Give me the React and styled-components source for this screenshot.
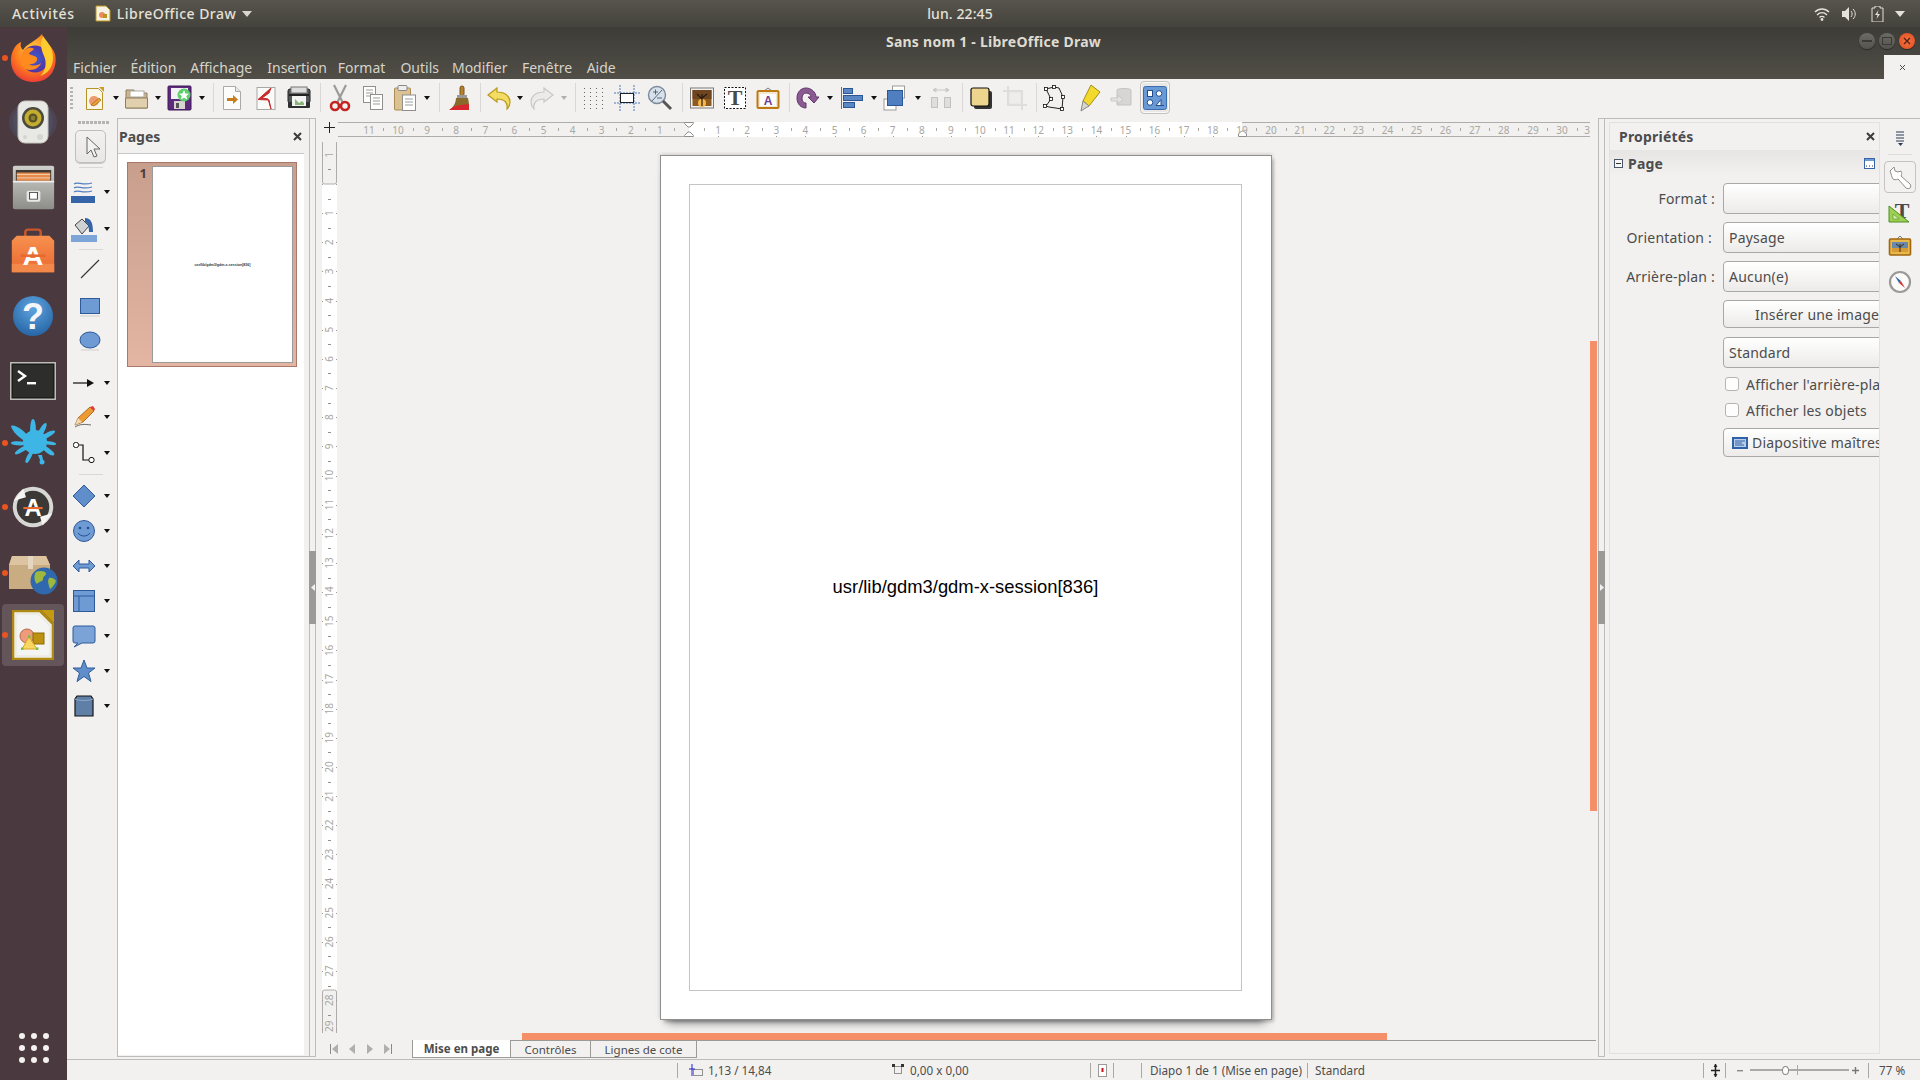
import React from 'react';
import styled, { createGlobalStyle } from 'styled-components';

const Global = createGlobalStyle`
  html, body { margin: 0; padding: 0; background: #f2f1f0; overflow: hidden; }
  * { box-sizing: border-box; }
  #root { font-family: "Noto Sans", "Open Sans", sans-serif; }
`;

const Screen = styled.div`width:1920px;height:1080px;display:flex;flex-direction:column;overflow:hidden;`;
const TopBar = styled.header`height:27px;flex:none;display:grid;grid-template-columns:1fr auto 1fr;align-items:center;
  background:linear-gradient(#57544d,#45433d);color:#e4e1d8;font-size:14px;font-weight:500;`;
const TopLeft = styled.div`display:flex;align-items:center;padding-left:12px;`;
const Activities = styled.span`margin-right:20px;letter-spacing:.7px;`;
const AppName = styled.span`margin:0 6px 0 6px;letter-spacing:.45px;`;
const Clock = styled.span`letter-spacing:.1px;`;
const TopRight = styled.div`display:flex;align-items:center;justify-content:flex-end;gap:11px;padding-right:15px;`;
const BatterySlot = styled.span`display:block;margin-left:3px;`;

const Body = styled.div`flex:1;display:flex;min-height:0;`;
const Dock = styled.nav`width:67px;flex:none;background:#4a393e;display:flex;flex-direction:column;align-items:center;`;
const DockSlot = styled.div`width:62px;height:62px;margin-left:-5px;margin-top:${p=>p.$mt||0}px;flex:none;display:flex;align-items:center;justify-content:center;
  border-radius:4px;position:relative;background:${p=>p.$active?'#64555a':'transparent'};transform:translateX(2px);`;
const RunDot = styled.i`position:absolute;left:0;top:50%;margin-top:-3px;width:6px;height:6px;border-radius:50%;background:#e95420;`;
const AppGrid = styled.div`margin-top:auto;margin-bottom:17px;display:grid;grid-template-columns:repeat(3,6px);gap:6px;`;
const AppDot = styled.i`width:6px;height:6px;border-radius:50%;background:#f4f2f0;`;

const Win = styled.div`flex:1;display:flex;flex-direction:column;min-width:0;background:#f2f1f0;`;
const WinHeader = styled.div`background:linear-gradient(#3d3c37,#514e47);flex:none;`;
const TitleBar = styled.div`height:28px;display:grid;grid-template-columns:1fr auto 1fr;align-items:center;`;
const Title = styled.div`color:#dfdbd2;font-size:14px;font-weight:700;grid-column:2;letter-spacing:.25px;`;
const WinButtons = styled.div`display:flex;justify-content:flex-end;gap:4px;padding-right:5px;`;
const WinBtn = styled.div`width:16px;height:16px;border-radius:50%;display:flex;align-items:center;justify-content:center;
  background:${p=>p.$close?'radial-gradient(#f5764a,#df4a16)':'linear-gradient(#6d6b65,#55534d)'};box-shadow:0 1px 1px rgba(0,0,0,.4);`;
const MenuBar = styled.div`height:24px;display:flex;align-items:center;padding-left:6px;color:#d6d3ca;font-size:14px;`;
const MenuItem = styled.span`margin-right:${p=>p.$gap}px;white-space:nowrap;`;
const DocClose = styled.div`margin-left:auto;width:36px;height:24px;background:#f2f1f0;color:#4c4c4c;display:flex;align-items:center;justify-content:center;`;

const Toolbar = styled.div`height:39px;flex:none;display:flex;align-items:center;background:#f2f1f0;padding-bottom:2px;`;
const ToolGrip = styled.div`width:3px;height:22px;margin-left:3px;background:repeating-linear-gradient(#b5b4b2 0 2px,transparent 2px 4px);`;
const ToolIcon = styled.div`flex:none;width:${p=>p.$w}px;height:${p=>p.$h||26}px;margin-left:${p=>p.$ml}px;display:flex;align-items:center;justify-content:center;
  ${p=>p.$on?'border:1px solid #c4c3c1;border-radius:4px;background:#e9e8e6;box-shadow:inset 0 0 0 1px #f8f8f7;':''}`;
const ToolSep = styled.div`flex:none;width:1px;height:29px;background:#d9d8d6;margin-left:${p=>p.$ml}px;`;
const Caret = styled.i`display:block;width:0;height:0;border:3.5px solid transparent;border-bottom:0;border-top:4px solid ${p=>p.$off?'#b0afad':'#111'};`;

const Main = styled.div`flex:1;display:flex;min-height:0;`;
const SideTools = styled.aside`width:50px;flex:none;display:flex;flex-direction:column;align-items:flex-start;padding-left:4px;`;
const SideGrip = styled.div`margin:3px 0 0 7px;width:31px;height:3px;background:repeating-linear-gradient(90deg,#b5b4b2 0 3px,transparent 3px 4px);`;
const SideRow = styled.div`height:26px;flex:none;display:flex;align-items:center;margin-top:${p=>p.$mt}px;padding-left:${p=>p.$solo?6:0}px;`;
const SideIcon = styled.div`width:26px;height:26px;display:flex;align-items:center;justify-content:center;`;
const SideCaret = styled.div`margin-left:6.5px;`;
const SelectBtn = styled.div`margin:6px 0 0 4px;width:31px;height:33px;border:1px solid #bfbebc;border-radius:5px;background:linear-gradient(#f2f1f0,#e8e7e5);display:flex;align-items:center;justify-content:center;box-shadow:0 1px 0 #c8c7c5;`;
const SideSep = styled.div`margin:${p=>p.$mt}px 0 0 8px;width:24px;height:1px;background:#d9d8d6;flex:none;`;

const PagesPanel = styled.section`width:199px;flex:none;display:flex;border-top:1px solid #bdbcba;border-left:1px solid #bdbcba;margin-bottom:2px;border-bottom:1px solid #bdbcba;`;
const PagesInner = styled.div`width:187px;display:flex;flex-direction:column;`;
const PanelHead = styled.div`height:34px;flex:none;display:flex;align-items:center;justify-content:space-between;padding:1px 0 0 1px;color:#4c4c4c;font-size:14px;font-weight:700;`;
const PanelClose = styled.span`display:flex;margin-right:2px;`;
const PageList = styled.div`flex:1;margin-bottom:1px;background:#fff;border-top:1px solid #c8c7c5;padding:8px 0 0 9px;`;
const Thumb = styled.div`width:170px;height:205px;display:flex;background:linear-gradient(#c89e8d,#e3b5a2);border:1px solid #a8796a;padding:3px 3px 3px 0;`;
const ThumbNo = styled.div`width:24px;text-align:right;padding-right:5px;font-size:13px;font-weight:700;line-height:15px;color:#4a3f3c;`;
const ThumbPage = styled.div`flex:1;background:#fff;border:1px solid #9a9a9a;display:flex;align-items:center;justify-content:center;color:#333;font-family:"Liberation Sans",sans-serif;font-size:3.6px;white-space:nowrap;font-weight:700;`;
const Strip = styled.div`width:7px;margin-left:${p=>p.$ml||0}px;flex:none;display:flex;align-items:center;border-left:1px solid #bdbcba;border-right:1px solid #bdbcba;`;
const Handle = styled.div`width:7px;height:73px;flex:none;margin-left:-1px;background:#9b9a96;display:flex;align-items:center;justify-content:center;`;

const Workspace = styled.section`width:1282px;flex:none;display:flex;flex-direction:column;`;
const HRulerRow = styled.div`height:24px;flex:none;display:flex;`;
const Corner = styled.div`width:22px;padding:3px 0 0 7px;`;
const CenterRow = styled.div`height:891px;flex:none;display:flex;`;
const Canvas = styled.div`width:1252px;flex:none;padding:13px 0 0 322px;overflow:hidden;`;
const PageSheet = styled.div`width:612px;height:865px;background:#fff;border:1px solid #8f8f8f;padding:28px 29px 28px 28px;
  box-shadow:3px 3px 3px -1px rgba(0,0,0,.2),0 9px 9px -7px rgba(0,0,0,.55),2px -2px 2px rgba(0,0,0,.05),-2px -2px 2px rgba(0,0,0,.05);`;
const MarginBox = styled.div`width:100%;height:100%;border:1px solid #c4c4c4;display:flex;align-items:center;justify-content:center;padding-bottom:2px;
  color:#000;font-family:"Liberation Sans",Arial,sans-serif;font-size:18.4px;`;
const VScroll = styled.div`width:7px;flex:none;padding-top:199px;`;
const VThumb = styled.div`width:7px;height:470px;background:#f48f67;`;
const HScroll = styled.div`height:7px;flex:none;padding-left:206px;`;
const HThumb = styled.div`width:865px;height:7px;background:#f48f67;`;
const TabRow = styled.div`height:18px;flex:none;display:flex;`;
const TabNav = styled.div`width:96px;display:flex;align-items:center;gap:8px;padding-left:13px;`;
const TabStrip = styled.div`flex:1;display:flex;border-top:1px solid #9b9a97;margin-right:2px;`;
const Tab = styled.div`height:18px;margin-top:-1px;width:${p=>p.$w}px;flex:none;display:flex;align-items:center;justify-content:center;font-size:11.5px;color:#4c4c4c;
  border-bottom:1px solid #9b9a97;border-right:1px solid #9b9a97;border-left:${p=>p.$first?'1px solid #9b9a97':'0'};border-top:${p=>p.$active?'0':'1px solid #9b9a97'};
  background:${p=>p.$active?'#fff':'#f2f1f0'};font-weight:${p=>p.$active?700:400};`;

const Sidebar = styled.aside`flex:1;display:flex;min-width:0;border-top:1px solid #bdbcba;`;
const SideStripWrap = styled.div`display:flex;margin-bottom:2px;border-bottom:1px solid #bdbcba;`;
const PropsPanel = styled.div`width:271px;margin:3px 0 5px 4px;flex:none;overflow:hidden;border:1px solid #e2e1df;color:#4c4c4c;font-size:14px;letter-spacing:.2px;`;
const PropsHead = styled.div`height:27px;display:flex;align-items:center;justify-content:space-between;padding:0 4px 0 9px;font-weight:700;`;
const SectionHead = styled.div`height:26px;display:flex;align-items:center;padding:0 4px;font-weight:700;background:linear-gradient(#e6e5e3,#f2f1f0);`;
const SectionTitle = styled.span`margin-left:5px;flex:1;`;
const Form = styled.div`padding:7px 0 0 0;display:flex;flex-direction:column;`;
const FormRow = styled.div`display:flex;align-items:center;height:${p=>p.$h||31}px;margin-bottom:${p=>p.$mb??8}px;`;
const FieldLabel = styled.label`width:${p=>p.$w||113}px;flex:none;text-align:right;padding-right:8px;white-space:nowrap;margin-right:${p=>p.$mr||0}px;`;
const Field = styled.div`width:200px;height:100%;flex:none;margin-left:${p=>p.$ml||0}px;border:1px solid #a9a8a5;border-radius:4px;background:linear-gradient(#fff,#ecebe9);display:flex;align-items:center;
  padding-left:${p=>p.$pl||5}px;white-space:nowrap;gap:4px;`;
const CheckRow = styled.div`display:flex;align-items:center;height:22px;margin-left:115px;white-space:nowrap;margin-bottom:${p=>p.$mb||0}px;`;
const CheckBox = styled.i`width:14px;height:14px;border:1px solid #b5b4b2;border-radius:3px;background:#fdfdfd;flex:none;margin-right:7px;`;
const TabBar = styled.div`flex:1;display:flex;flex-direction:column;align-items:center;padding-top:11px;`;
const TabIcon = styled.div`width:32px;height:32px;margin-top:${p=>p.$mt||0}px;display:flex;align-items:center;justify-content:center;${p=>p.$on?'border:1px solid #c4c3c1;border-radius:4px;':''}`;
const TabSep = styled.div`width:24px;height:1px;background:#dddcda;margin-top:6px;`;

const StatusBar = styled.footer`height:21px;flex:none;border-top:1px solid #bdbcba;display:flex;align-items:center;font-size:11.7px;color:#4c4c4c;white-space:nowrap;`;
const Cell = styled.div`width:${p=>p.$w}px;height:15px;flex:none;display:flex;align-items:center;gap:${p=>p.$gap??4}px;padding-left:${p=>p.$pl||0}px;${p=>p.$sep?'border-left:1px solid #a9a8a5;':''}`;
const ZoomTrack = styled.div`width:99px;height:2px;background:#aaa9a7;margin:0 3px 0 7px;position:relative;`;
const ZoomKnob = styled.i`position:absolute;left:32px;top:-3px;width:7px;height:9px;border-radius:50%;background:#fff;border:1px solid #8a8987;`;
const ZoomMark = styled.i`position:absolute;left:47px;top:-4px;width:1px;height:10px;background:#aaa9a7;`;

const Svg = ({w=24,h,dw,dh,children}) => <svg width={dw||w} height={dh||h||w} viewBox={`0 0 ${w} ${h||w}`} preserveAspectRatio="none" style={{display:'block',flex:'none'}}>{children}</svg>;

/* ---- dock icons ---- */
const Firefox = () => <Svg w={52}>
  <defs>
    <radialGradient id="ffo" cx=".5" cy=".35" r=".75"><stop offset="0" stopColor="#ffd43a"/><stop offset=".55" stopColor="#ff7a1e"/><stop offset="1" stopColor="#e3283f"/></radialGradient>
    <radialGradient id="ffb" cx=".5" cy=".5" r=".6"><stop offset="0" stopColor="#3b5fd0"/><stop offset="1" stopColor="#5a2a9a"/></radialGradient>
  </defs>
  <path d="M35 2c2 8 10 11 13 20 3 13-4 28-21 28C12 50 3 40 4 26 5 18 9 12 14 10c-1 4 0 6 2 8 3-6 12-8 19-16z" fill="url(#ffo)"/>
  <circle cx="28" cy="27" r="13.5" fill="url(#ffb)"/>
  <path d="M36 4c4 6 10 11 10 22 0 10-6 16-13 18 6-5 7-14 4-20-2-5-5-12-1-20z" fill="#ffcb2e"/>
  <path d="M15 22c4-7 9-7 12-5-1 2-5 3-5 5 3 2 6 1 8 4 1 4-4 7-8 6 4 3 10 1 12-1-2 7-14 10-19 3-2-3-2-7 0-12z" fill="#ff8a1e"/>
</Svg>;
const SpeakerApp = () => <Svg w={52}>
  <ellipse cx="26" cy="26" rx="24" ry="21" fill="#566080" opacity=".3"/>
  <ellipse cx="26" cy="26" rx="20" ry="20" fill="#566080" opacity=".3"/>
  <rect x="11" y="5" width="30" height="42" rx="7" fill="#e8e8e4"/><rect x="11" y="5" width="30" height="42" rx="7" fill="none" stroke="#c6c6c0"/>
  <circle cx="26" cy="22" r="11" fill="#4c4a3e"/><circle cx="26" cy="22" r="8.500" fill="#c2ad2e"/><circle cx="26" cy="22" r="4.500" fill="#5a5326"/><circle cx="26" cy="22" r="2.200" fill="#8c8230"/>
  <circle cx="33" cy="41" r="3" fill="#d4d4d0"/><circle cx="18" cy="41" r="2" fill="#d4d4d0"/>
</Svg>;
const FilesApp = () => <Svg w={54} dw={53} dh={45}>
  <defs><linearGradient id="cab" x1="0" y1="0" x2="0" y2="1"><stop offset="0" stopColor="#cfcfcb"/><stop offset="1" stopColor="#8d8d89"/></linearGradient></defs>
  <rect x="6" y="1" width="42" height="52" rx="2" fill="url(#cab)"/><rect x="9" y="6" width="36" height="13" fill="#3f3a36"/>
  <rect x="10" y="9" width="34" height="10" fill="#e58a4a"/><rect x="10" y="11" width="34" height="1" fill="#f7d9b4"/><rect x="10" y="15" width="34" height="1" fill="#fff" opacity=".7"/>
  <rect x="6" y="19" width="42" height="2" fill="#eee"/>
  <rect x="20" y="31" width="14" height="13" rx="2" fill="#e7e7e5"/><rect x="23" y="33" width="8" height="8" fill="#fff" stroke="#444"/>
</Svg>;
const SoftwareApp = () => <Svg w={54} dw={52} dh={46}>
  <defs><linearGradient id="bag" x1="0" y1="0" x2="0" y2="1"><stop offset="0" stopColor="#f7914f"/><stop offset="1" stopColor="#e9682f"/></linearGradient></defs>
  <path d="M19 11V5c0-2 1-3 3-3h10c2 0 3 1 3 3v6" fill="none" stroke="#c9562a" strokeWidth="2.600"/>
  <path d="M10 9h34l5 6v37H5V15z" fill="url(#bag)"/><rect x="5" y="42" width="44" height="10" fill="#f2884a"/>
  <text x="27" y="43" textAnchor="middle" fontFamily="Liberation Sans" fontWeight="700" fontSize="30" fill="#fff">A</text>
  <rect x="14" y="31" width="26" height="3" fill="#e9682f"/>
</Svg>;
const HelpApp = () => <Svg w={52}>
  <defs><radialGradient id="hlp" cx=".5" cy=".3" r=".8"><stop offset="0" stopColor="#5fa5e0"/><stop offset="1" stopColor="#1f5d9e"/></radialGradient></defs>
  <circle cx="26" cy="26" r="20" fill="url(#hlp)"/>
  <text x="26" y="39" textAnchor="middle" fontFamily="Liberation Sans" fontWeight="700" fontSize="36" fill="#f4f6f8">?</text>
</Svg>;
const TerminalApp = () => <Svg w={46} h={38}>
  <rect x=".5" y=".5" width="45" height="37" fill="#1d1d1b" stroke="#bcbcb8" strokeWidth="2"/><rect x="3" y="3" width="40" height="32" fill="#2d2d2b"/>
  <path d="M8 9l7 5-7 5" fill="none" stroke="#fff" strokeWidth="2.400"/><rect x="17" y="20" width="9" height="2.400" fill="#fff"/>
</Svg>;
const SplashApp = () => <Svg w={48}>
  <g fill="#3db6e6">
    <circle cx="26" cy="23" r="12"/><path d="M2 7c4-2 12 4 17 10l-3 5C10 19 3 12 2 7z"/><path d="M24 0c2 0 3 6 3 14h-6C21 6 22 0 24 0z"/>
    <path d="M37 4c2 1-1 8-5 14l-4-3C31 9 35 3 37 4z"/><path d="M46 12c1 2-7 7-12 9l-2-4c5-3 12-7 14-5z"/><path d="M47 25c0 2-6 1-11 0v-3c5 0 11 1 11 3z"/>
    <path d="M45 36c-2 2-8-2-12-7l2-3c5 3 12 8 10 10z"/><path d="M6 35c-1-2 6-7 11-9l2 4c-5 2-11 7-13 5z"/><path d="M2 24c0-2 8-2 14-1v3c-6 1-14 0-14-2z"/>
    <path d="M17 44c-2-1 1-8 4-11l3 1c-2 5-5 11-7 10z"/><circle cx="33" cy="43" r="2.500"/><path d="M29 36l4 0 1 5-3 0z"/>
  </g>
</Svg>;
const UpdaterApp = () => <Svg w={50} dw={44} dh={44}>
  <circle cx="25" cy="25" r="23" fill="#d7d7d5"/><circle cx="25" cy="25" r="18.500" fill="#3b3836"/>
  <path d="M3 18L14 4l3 10zM47 32L36 46l-3-10z" fill="#f4f4f2"/>
  <text x="25" y="35" textAnchor="middle" fontFamily="Liberation Sans" fontWeight="700" fontSize="27" fill="#fff">A</text>
  <rect x="14" y="25" width="22" height="2.400" fill="#e9682f"/>
</Svg>;
const PackageApp = () => <Svg w={50} h={44}>
  <path d="M4 5h34l4 9v24H1V14z" fill="#c9ac82"/><path d="M4 5h34l4 9H1z" fill="#dcc4a0"/><rect x="20" y="5" width="5" height="13" fill="#e4d6c0"/>
  <circle cx="36" cy="30" r="13.500" fill="#2f68ac"/><path d="M28 21c4-2 9-1 10 1s-3 3-3 6-4 2-6 5c-2-1-4-8-1-12zM41 27c3-1 6 1 7 3-1 3-4 7-6 8-1-4-3-7-1-11z" fill="#9db83c"/>
</Svg>;
const DrawApp = () => <Svg w={42} h={50}>
  <path d="M1 1h27l13 13v35H1z" fill="#f1f0ec" stroke="#b08a10" strokeWidth="2.600"/><path d="M29 0h13v13z" fill="#c49a12"/>
  <path d="M4 4h22l12 12v30H4z" fill="#f4f4f2" stroke="#e6e4dc"/>
  <circle cx="15" cy="26" r="7" fill="#ee9b7c" stroke="#b9694c"/><rect x="21" y="23" width="11" height="11" fill="#bd9211" stroke="#8c6c0c"/>
  <path d="M10 39l7-12 8 12z" fill="#f8d660" stroke="#d9a520"/><g fill="#6fbf3a"><rect x="9" y="37.500" width="2.400" height="2.400"/><rect x="24" y="37.500" width="2.400" height="2.400"/><rect x="16" y="25.500" width="2.400" height="2.400"/></g>
</Svg>;

/* ---- main toolbar icons ---- */
const D = ({p,f='#fff',s='#8f8f8b'}) => <path d={p} fill={f} stroke={s}/>;
const NewIco = () => <Svg><D p="M4.500 2.500h12l4 4v17h-16z" f="#fbf7e8" s="#b3932a"/><path d="M17 1h5v5z" fill="#c9a11c"/><circle cx="12" cy="15" r="5" fill="#ee9a70"/><path d="M9 19l8-7 2 2-7 6z" fill="#e9a530" stroke="#8a5b12" strokeWidth=".6"/></Svg>;
const OpenIco = () => <Svg w={26}><path d="M2 5h8l2 3h11v15H2z" fill="#cdb68c" stroke="#8f7d5c"/><rect x="6" y="6" width="14" height="6" fill="#fff" stroke="#a9a9a6"/><path d="M1.500 13h22v10h-22z" fill="#e1d0ad" stroke="#8f7d5c"/></Svg>;
const SaveIco = () => <Svg w={26}><rect x="1" y="1" width="23" height="24" rx="1" fill="#5e2a7e" stroke="#3e1a58"/><rect x="4" y="3" width="17" height="11" fill="#f3f0f4"/><rect x="7" y="16" width="11" height="8" fill="#d9d6d0"/><rect x="9" y="18" width="3" height="5" fill="#555"/><circle cx="17" cy="10" r="6.500" fill="#5ccf6a"/><path d="M17 5l1.500 3.500 3.500.3-2.700 2.300.9 3.400L17 12.700 13.800 14.500l.9-3.400L12 8.800l3.500-.3z" fill="#fff"/></Svg>;
const ExportIco = () => <Svg w={26}><D p="M4.500 1.500h12l5 5v18h-17z" f="#fcfcfb" s="#aaa9a6"/><path d="M16.500 1.500v5h5" fill="#e8e8e5" stroke="#aaa9a6"/><path d="M8 13h6v-3l5 4.500-5 4.500v-3H8z" fill="#c87d1c"/></Svg>;
const PdfIco = () => <Svg w={26}><rect x="4" y="2.500" width="18" height="22" fill="#fbfbfa" stroke="#a8a7a4"/><path d="M18 3L5 14.500l11 .5 2 9-3-10-6-1 7-5z" fill="#c92a2a" stroke="#c92a2a"/></Svg>;
const PrintIco = () => <Svg w={26}><rect x="2" y="4" width="22" height="14" rx="2" fill="#55585a" stroke="#222"/><rect x="5" y="2" width="16" height="6" fill="#ddd" stroke="#777"/><rect x="3" y="9" width="20" height="2" fill="#222"/><rect x="2" y="17" width="22" height="6" rx="1" fill="#2e3032"/><path d="M6 11h14v10H6z" fill="#f3f3f1"/><path d="M9 14l4 4 3-2 2 2v2H9z" fill="#89b47a"/></Svg>;
const CutIco = () => <Svg w={24} h={28}><path d="M6 1l9 18M18 1L9 19" stroke="#9b9b98" strokeWidth="2.200" fill="none"/><circle cx="7" cy="22" r="4" fill="none" stroke="#c3221f" strokeWidth="2.600"/><circle cx="17" cy="22" r="4" fill="none" stroke="#c3221f" strokeWidth="2.600"/></Svg>;
const CopyIco = () => <Svg w={22} h={26}><rect x="1.500" y="1.500" width="12" height="16" fill="#fff" stroke="#8f8f8b"/><path d="M4 5h7M4 8h7M4 11h7" stroke="#9b9b98"/><rect x="8.500" y="9.500" width="12" height="15" fill="#fff" stroke="#8f8f8b"/><path d="M11 13h7M11 16h7M11 19h7" stroke="#9b9b98"/></Svg>;
const PasteIco = () => <Svg w={24} h={28}><rect x="1.500" y="4" width="16" height="22" rx="1" fill="#dcc192" stroke="#a98c56"/><rect x="5" y="1.500" width="9" height="5" rx="1" fill="#eee" stroke="#888"/><rect x="9.500" y="11" width="13" height="15.500" fill="#fff" stroke="#8f8f8b"/><path d="M12 15h8M12 18h8M12 21h8" stroke="#9b9b98"/></Svg>;
const BrushIco = () => <Svg w={26}><rect x="14" y="1" width="4" height="10" rx="2" fill="#b5812e" stroke="#7c5718"/><rect x="11" y="10" width="10" height="3" fill="#999"/><path d="M10 13h12l1 6c-2 2-14 3-18 5 3-3 5-7 5-11z" fill="#8a6a2c"/><path d="M3 25c4-4 10-5 20-6v6z" fill="#d7262d"/></Svg>;
const UndoIco = ({off}) => <Svg w={26} h={24}><path d="M2 9l9-7v4c9 0 13 5 13 10 0 3-1 5-3 7 1-6-2-10-10-10v3z" fill={off?'#ecebe9':'#f3dc63'} stroke={off?'#c9c8c6':'#b99a1a'} strokeWidth="1.200" transform={off?'matrix(-1 0 0 1 26 0)':''}/></Svg>;
const GridIco = () => <Svg w={24}>{[2,8,14,20].flatMap(x=>[2,6,10,14,18,22].map(y=><rect key={x+'-'+y} x={x} y={y} width="1" height="1" fill="#666"/>))}</Svg>;
const LinesIco = () => <Svg w={28}><path d="M7 1v26M21 1v26M1 9h26M1 19h26" stroke="#4c79b8" strokeDasharray="2 1"/><rect x="7.500" y="9.500" width="13" height="9" fill="#fff" stroke="#222"/></Svg>;
const ZoomIco = () => <Svg w={26}><circle cx="10" cy="10" r="8.500" fill="#d6e1ec" stroke="#7d8a99" strokeWidth="1.400"/><path d="M6 7h5M8.500 4.500v5M10 13h5M5 16L15 5" stroke="#4d5a68" strokeWidth=".9"/><path d="M16 16l8 8" stroke="#555" strokeWidth="3"/></Svg>;
const ImageIco = () => <Svg w={26}><rect x="1.500" y="3" width="23" height="20" fill="#f2f2f0" stroke="#7b7b78"/><rect x="3.500" y="5" width="19" height="16" fill="#8d5a22"/><path d="M3.500 5h19v9H3.500z" fill="#6e4520"/><circle cx="13" cy="18" r="4" fill="#f4b84a"/><path d="M13 21V9M13 14l-5-5M13 13l5-4" stroke="#2a1a10" strokeWidth="1.200"/></Svg>;
const TextIco = () => <Svg w={24}><rect x="1.500" y="1.500" width="21" height="21" fill="#fff" stroke="#111" strokeDasharray="2 1.500"/><text x="12" y="19" textAnchor="middle" fontFamily="Liberation Serif" fontWeight="700" fontSize="22" fill="#4a4a48">T</text></Svg>;
const FontworkIco = () => <Svg w={24}><path d="M8 5l4-3 4 3" fill="none" stroke="#777"/><rect x="1.500" y="5" width="21" height="17" rx="1" fill="#f3e9d2" stroke="#bd7a14" strokeWidth="2"/><rect x="4" y="8" width="16" height="12" fill="#fdfdfd"/><text x="12" y="18.500" textAnchor="middle" fontFamily="Liberation Sans" fontWeight="700" fontSize="12" fill="#6f3f8f">A</text></Svg>;
const RotateIco = () => <Svg w={26}><path d="M12 3c-5 0-9 4-9 10s4 10 9 10l0-5c-3 0-4-2-4-5s2-5 4-5c3 0 5 2 5 4h-3l6 6 5-6h-3c0-5-5-9-10-9z" fill="#8b5a93" stroke="#5f3769"/></Svg>;
const AlignIco = () => <Svg w={24}><path d="M1.500 1v22" stroke="#6e6e6e"/><rect x="3.500" y="2.500" width="9" height="5" fill="#5b87c2" stroke="#2c5796"/><rect x="3.500" y="9.500" width="19" height="5" fill="#5b87c2" stroke="#2c5796"/><rect x="3.500" y="16.500" width="11" height="5" fill="#5b87c2" stroke="#2c5796"/></Svg>;
const ArrangeIco = () => <Svg w={24} h={26}><rect x="9.500" y="1" width="12" height="12" fill="#fff" stroke="#9b9b98"/><rect x="1" y="14" width="12" height="11" fill="#fff" stroke="#9b9b98"/><rect x="4.500" y="5.500" width="15" height="15" fill="#4f7fc0" stroke="#2c5796"/></Svg>;
const DistIco = () => <Svg w={24} h={26}><path d="M4 5h16M4 5l3-2v4zM20 5l-3-2v4z" stroke="#c9c8c6" fill="#d3d2d0"/><rect x="2.500" y="12.500" width="6" height="10" fill="#dfdedc" stroke="#c2c1bf"/><rect x="15.500" y="12.500" width="6" height="10" fill="#dfdedc" stroke="#c2c1bf"/></Svg>;
const ShadowIco = () => <Svg w={24}><rect x="5" y="5" width="18" height="18" rx="2" fill="#333"/><rect x="2" y="2" width="18" height="18" rx="2" fill="#eed58e" stroke="#111" strokeWidth="1.200"/></Svg>;
const CropIco = () => <Svg w={26}><path d="M6 1v19h19M1 6h19v19" fill="none" stroke="#dedddb" strokeWidth="2"/><rect x="7" y="7" width="12" height="12" fill="#eeedeb" stroke="#e2e1df" strokeDasharray="2 1"/></Svg>;
const PointsIco = () => <Svg w={24} h={28}><path d="M3 5l8-2 5 1 4 9-1 12-13-2-3-1 5-7z" fill="none" stroke="#222"/>{[[3,5],[11,3],[20,13],[19,25],[2,22],[8,15]].map(([x,y])=><rect key={x} x={x-1.500} y={y-1.500} width="3" height="3" fill="#fff" stroke="#111" strokeWidth=".8"/>)}</Svg>;
const GlueIco = () => <Svg w={26} h={28}><path d="M15 1l9 7-11 14-6-5z" fill="#f3d92c" stroke="#a18f14"/><path d="M7 17l6 5-5 3-3 2z" fill="#d8d6cc" stroke="#888"/></Svg>;
const ExtrudeIco = () => <Svg w={24}><path d="M7 4c0-2 14-2 14 0v15H7z" fill="#d7d6d4" stroke="#c5c4c2"/><path d="M1 12h7v-3l5 4.500-5 4.500v-3H1z" fill="#e4e3e1" stroke="#c8c7c5"/></Svg>;
const ShapesIco = () => <Svg w={24}><rect x=".5" y=".5" width="23" height="23" rx="2" fill="#6a9ad6" stroke="#3a6cb0"/><rect x="4.500" y="4.500" width="5" height="6" fill="#fff" stroke="#234f8f"/><circle cx="16" cy="7.500" r="2.800" fill="#fff" stroke="#234f8f"/><circle cx="7" cy="16.500" r="2.800" fill="#fff" stroke="#234f8f"/><path d="M13 19.500l5-6v6h3z" fill="#fff" stroke="#234f8f"/></Svg>;

const RedoIco = () => <UndoIco off/>;
const topTools = [
  [NewIco,94,26],['c',116],[OpenIco,137,26],['c',158],[SaveIco,180,26],['c',202],['s',213],
  [ExportIco,232,26],[PdfIco,266,26],[PrintIco,299,26],['s',320],[CutIco,340,24],[CopyIco,373,22],[PasteIco,405,24],['c',427],['s',439],
  [BrushIco,459,26],['s',480],[UndoIco,499,26],['c',520],[RedoIco,542,26],['o',564],['s',575],
  [GridIco,594,24],[LinesIco,627,28],[ZoomIco,660,26],['s',682],[ImageIco,702,26],[TextIco,735,24],[FontworkIco,768,24],['s',789],
  [RotateIco,807,26],['c',830],[AlignIco,852,24],['c',874],[ArrangeIco,895,24],['c',918],[DistIco,941,24],['s',962],
  [ShadowIco,981,24],[CropIco,1015,26],['s',1036],[PointsIco,1055,24],[GlueIco,1089,26],[ExtrudeIco,1122,24],[ShapesIco,1155,30,true],
];

const TopTools = () => {
  let x = 73;
  return <>{topTools.map(([k,c,w,on],i)=>{
    if (k==='s') { const ml=c-x; x=c+1; return <ToolSep key={i} $ml={ml}/>; }
    if (k==='c'||k==='o') { const l=c-3.5; const ml=l-x; x=l+7; return <ToolIcon key={i} $w={7} $h={8} $ml={ml}><Caret $off={k==='o'}/></ToolIcon>; }
    const l=c-w/2; const ml=l-x; x=l+w; const Ico=k;
    return <ToolIcon key={i} $w={w} $h={on?33:26} $ml={ml} $on={on}><Ico/></ToolIcon>;
  })}</>;
};

/* ---- left toolbar icons ---- */
const PointerIco = () => <Svg w={24}><path d="M8 2v17l4-4 3 7 3-1-3-7h6z" fill="#f2f2f0" stroke="#666"/></Svg>;
const LineColorIco = () => <Svg w={26}><path d="M3 5c4-3 8 2 18-1M3 9c4-3 8 2 18-1M3 13c4-3 8 2 18-1" fill="none" stroke="#4f7fc0" strokeWidth="1.300"/><rect y="17" width="24" height="7" fill="#3565a8"/></Svg>;
const FillIco = () => <Svg w={26}><path d="M4 9l7-6 7 7-7 8z" fill="#cfd2d3" stroke="#444"/><path d="M14 2c6 0 8 5 8 14h-4c0-5-1-9-4-10z" fill="#3565a8"/><rect y="19" width="26" height="7" fill="#7ea5d8"/></Svg>;
const LineIco = () => <Svg w={22}><path d="M2 20L20 2" stroke="#333" strokeWidth="1.100"/></Svg>;
const RectIco = () => <Svg w={24}><rect x="2.500" y="4.500" width="19" height="15" fill="#6f9bd4" stroke="#2e5a9a"/><rect x="2" y="21" width="20" height="2" fill="#e1e0de"/></Svg>;
const EllipseIco = () => <Svg w={24}><ellipse cx="12" cy="11" rx="10" ry="8" fill="#6f9bd4" stroke="#2e5a9a"/><rect x="3" y="20" width="18" height="2" fill="#e1e0de"/></Svg>;
const ArrowIco = () => <Svg w={24} h={12}><path d="M1 6h16" stroke="#111" strokeWidth="1.200"/><path d="M15 2l7 4-7 4z" fill="#111"/></Svg>;
const PencilIco = () => <Svg w={24}><path d="M3 20l3-7L18 2l4 4-11 11z" fill="#ed9a33" stroke="#a05b12" strokeWidth=".8"/><path d="M3 20l3-7 4 4z" fill="#eed8b4"/><path d="M18 2l4 4 1-2-2-3z" fill="#e23a3a"/><path d="M3 22c5-3 9-3 16-2" stroke="#444" fill="none" strokeWidth=".8"/></Svg>;
const ConnectorIco = () => <Svg w={24}><path d="M7 4h4v15h6" fill="none" stroke="#111" strokeWidth="1.200"/><rect x="1.500" y="1.500" width="5" height="5" rx="2" fill="#fff" stroke="#111"/><rect x="17" y="16.500" width="5" height="5" rx="2" fill="#fff" stroke="#111"/></Svg>;
const DiamondIco = () => <Svg w={24}><path d="M12 1l11 11-11 11L1 12z" fill="#5f8ecb" stroke="#2e5a9a"/></Svg>;
const SmileIco = () => <Svg w={24}><circle cx="12" cy="12" r="10.500" fill="#6f9bd4" stroke="#2e5a9a"/><circle cx="8" cy="9" r="1.300" fill="#234f8f"/><circle cx="16" cy="9" r="1.300" fill="#234f8f"/><path d="M6 14c3 4 9 4 12 0" fill="none" stroke="#234f8f"/></Svg>;
const DblArrowIco = () => <Svg w={24} h={16}><path d="M1 8l6-6v4h10V2l6 6-6 6v-4H7v4z" fill="#6f9bd4" stroke="#2e5a9a"/></Svg>;
const TableIco = () => <Svg w={24}><rect x="1.500" y="1.500" width="21" height="21" fill="#6f9bd4" stroke="#2e5a9a"/><path d="M1.500 7h21M7 7v15.500" stroke="#2e5a9a"/></Svg>;
const CalloutIco = () => <Svg w={24}><path d="M3 2h18a2 2 0 0 1 2 2v13a2 2 0 0 1-2 2H10l-8 4 4-4H3a2 2 0 0 1-2-2V4a2 2 0 0 1 2-2z" fill="#7ba3d8" stroke="#2e5a9a"/></Svg>;
const StarIco = () => <Svg w={24}><path d="M12 1l3 8h8l-6.500 5 2.500 8.500L12 17.500 5 22.500 7.500 14 1 9h8z" fill="#5f8ecb" stroke="#2e5a9a"/></Svg>;
const CubeIco = () => <Svg w={20} h={22}><path d="M3 1h14l2 3v17H1V4z" fill="#5f7fa6" stroke="#151515" strokeWidth="1.200"/><path d="M1 4c4 2 14 2 18 0" fill="none" stroke="#8fa8c6"/></Svg>;

const sideRows = [
  {I:LineColorIco,mt:11,c:1},{I:FillIco,mt:11,c:1},{sep:7},{I:LineIco,mt:6},{I:RectIco,mt:11},{I:EllipseIco,mt:9},
  {I:ArrowIco,mt:16,c:1},{I:PencilIco,mt:8,c:1},{I:ConnectorIco,mt:10,c:1},{sep:8},{I:DiamondIco,mt:8,c:1},{I:SmileIco,mt:9,c:1},
  {I:DblArrowIco,mt:9,c:1},{I:TableIco,mt:8.500,c:1},{I:CalloutIco,mt:9,c:1},{I:StarIco,mt:9.500,c:1},{I:CubeIco,mt:9,c:1},
];

/* ---- rulers ---- */
const CM = 29.1;
const HRuler = () => {
  const ns=[]; for(let n=-11;n<=30;n++) ns.push(n);
  const z=351, e=904;
  return <Svg w={1252} h={24}>
    <rect x={z} y={4} width={e-z} height={15} fill="#fff"/>
    <path d={`M0 4.500H${z}M${e} 4.500H1252M0 18.500H${z}M${e} 18.500H1252`} stroke="#aeadab"/>
    {ns.map(n=>{const x=z+n*CM; return <g key={n}>
      {n!==0 && <text x={x} y={15.500} textAnchor="middle" fontFamily="Noto Sans" fontSize="10" fill="#a9a7a2">{Math.abs(n)}</text>}
      <rect x={Math.round(x)} y={18} width="1" height="1" fill="#9a9a98"/>
      <rect x={Math.round(x+CM/2)} y={10} width="1" height="3" fill="#a9a7a2"/>
    </g>;})}
    <text x={1252} y={15.500} textAnchor="end" fontFamily="Noto Sans" fontSize="10" fill="#a9a7a2">3</text>
    <path d={`M${z-4.500} 4.500h9v1l-3.500 3.500h-2l-3.500-3.500zM${z-4.500} 18.500h9v-1l-3.500-3.500h-2l-3.500 3.500z`} fill="#fff" stroke="#8f8e8c"/>
    <path d={`M${e-3.500} 18.500h8v-2.500l-3-3h-2l-3 3z`} fill="#fff" stroke="#8f8e8c"/>
  </Svg>;
};
const VRuler = () => {
  const ns=[]; for(let n=-1;n<=29;n++) ns.push(n);
  const z=42, e=848, V=29.15;
  return <Svg w={22} h={891}>
    <rect x={6} y={z} width={15} height={e-z} fill="#fff"/>
    <path d={`M6.500 0V${z-2}q0 2 2 2H18.500q2 0 2-2V0M6.500 891V${e+2}q0-2 2-2H18.500q2 0 2 2V891`} fill="none" stroke="#aeadab"/>
    {ns.map(n=>{const y=z+n*V; return <g key={n}>
      {n!==0 && <text transform={`translate(17 ${n===29?y-3:y}) rotate(-90)`} textAnchor="middle" fontFamily="Noto Sans" fontSize="10" fill="#a9a7a2">{Math.abs(n)}</text>}
      <rect x={6} y={Math.round(y)} width="1" height="1" fill="#9a9a98"/><rect x={20} y={Math.round(y)} width="1" height="1" fill="#9a9a98"/>
      <rect x={12} y={Math.round(y+V/2)} width="3" height="1" fill="#8f8e8c"/>
    </g>;})}
  </Svg>;
};

const X = ({s=10,c='#3c3c3c',w=2}) => <Svg w={s}><path d={`M1 1L${s-1} ${s-1}M${s-1} 1L1 ${s-1}`} stroke={c} strokeWidth={w}/></Svg>;
const NavIco = ({d,bar}) => <Svg w={10} h={12}><path d={d} fill="#b0afad"/>{bar&&<rect x={bar} y="1" width="1" height="10" fill="#8a8987"/>}</Svg>;

const WrenchIco = () => <Svg w={24}><path d="M2 6l4-4 1 4 3 1 3-1c1 2 1 3 0 5l9 8c1 1 1 3 0 4s-3 1-4 0l-8-9c-2 1-4 1-5 0S3 8 2 6z" fill="#fff" stroke="#8f8e8c"/></Svg>;
const StyleTabIco = () => <Svg w={24}><text x="14" y="19" textAnchor="middle" fontFamily="Liberation Serif" fontWeight="700" fontSize="22" fill="#4a4a48">T</text><path d="M1 23L1 7l20 16z" fill="#9ccf52" stroke="#4f8f1f"/><path d="M5 20v-5l6 5z" fill="#d8ecb6" stroke="#4f8f1f" strokeWidth=".6"/></Svg>;
const GalleryTabIco = () => <Svg w={24}><path d="M9 4l3-3 3 3" fill="none" stroke="#777"/><rect x="1.500" y="4" width="21" height="16" rx="1" fill="#e9b84a" stroke="#a0660f" strokeWidth="1.600"/><rect x="4" y="7" width="16" height="10" fill="#6a89a8"/><rect x="4" y="13" width="16" height="4" fill="#d89a34"/><path d="M12 17V9M12 12l-4-3M12 12l4-3" stroke="#3a2a15"/></Svg>;
const CompassIco = () => <Svg w={24}><circle cx="12" cy="12" r="10" fill="#fbfbfa" stroke="#9a9997" strokeWidth="2.200"/><path d="M7 6l6 5-2 2z" fill="#3565a8"/><path d="M17 18l-6-5 2-2z" fill="#d23a3a"/></Svg>;

const menus = [['Fichier',14],['Édition',14],['Affichage',15],['Insertion',11],['Format',15],['Outils',13],['Modifier',14.5],['Fenêtre',14.5],['Aide',0]];
const dockApps = [
  {I:Firefox,dot:1,mt:0},{I:SpeakerApp,mt:2},{I:FilesApp,mt:3},{I:SoftwareApp,mt:2},{I:HelpApp,mt:3},{I:TerminalApp,mt:3},
  {I:SplashApp,dot:1,mt:0},{I:UpdaterApp,dot:1,mt:2},{I:PackageApp,dot:1,mt:4},{I:DrawApp,dot:1,active:1,mt:0},
];

export default function App() {
  return <Screen>
    <Global/>
    <TopBar>
      <TopLeft>
        <Activities>Activités</Activities>
        <Svg w={16} h={17}><path d="M1 1h10l4 4v11H1z" fill="#f6f3e6" stroke="#b8951c"/><circle cx="7" cy="10" r="3" fill="#e98c5c"/><rect x="8" y="9" width="4" height="4" fill="#b8951c"/></Svg>
        <AppName>LibreOffice Draw</AppName>
        <Svg w={10} h={6}><path d="M0 0h10L5 6z" fill="#d9d6cd"/></Svg>
      </TopLeft>
      <Clock>lun. 22:45</Clock>
      <TopRight>
        <Svg w={16} h={14}><path d="M1 5c4-4 10-4 14 0M3 8c3-3 7-3 10 0M5.500 10.500c1.500-1.500 3.500-1.500 5 0" fill="none" stroke="#e4e1d8" strokeWidth="1.400"/><circle cx="8" cy="12.500" r="1.400" fill="#e4e1d8"/></Svg>
        <Svg w={16} h={14}><path d="M1 4h3l4-4v14l-4-4H1z" fill="#e4e1d8"/><path d="M10 4c1.500 2 1.500 4 0 6M12 2c3 3 3 7 0 10" stroke="#e4e1d8" fill="none"/></Svg>
        <BatterySlot><Svg w={13} h={16}><path d="M4 0h5v2h3v14H1V2h3z" fill="none" stroke="#e4e1d8"/><path d="M7.500 4L4 9h2.500l-1 4L9 8H6.500z" fill="#e4e1d8"/></Svg></BatterySlot>
        <Svg w={10} h={6}><path d="M0 0h10L5 6z" fill="#e4e1d8"/></Svg>
      </TopRight>
    </TopBar>
    <Body>
      <Dock>
        {dockApps.map(({I,dot,active,mt},i)=><DockSlot key={i} $active={active} $mt={mt}>{dot&&<RunDot/>}<I/></DockSlot>)}
        <AppGrid>{Array.from({length:9},(_,i)=><AppDot key={i}/>)}</AppGrid>
      </Dock>
      <Win>
        <WinHeader>
          <TitleBar>
            <Title>Sans nom 1 - LibreOffice Draw</Title>
            <WinButtons>
              <WinBtn><Svg w={10} h={2}><rect width="10" height="2" fill="#3b3a36"/></Svg></WinBtn>
              <WinBtn><Svg w={10} h={8}><rect x=".5" y=".5" width="9" height="7" fill="none" stroke="#3b3a36"/></Svg></WinBtn>
              <WinBtn $close><X s={8} c="#5a2010" w={1.400}/></WinBtn>
            </WinButtons>
          </TitleBar>
          <MenuBar>
            {menus.map(([t,g])=><MenuItem key={t} $gap={g}>{t}</MenuItem>)}
            <DocClose><X s={7} c="#4c4c4c" w={1}/></DocClose>
          </MenuBar>
        </WinHeader>
        <Toolbar>
          <ToolGrip/>
          <TopTools/>
        </Toolbar>
        <Main>
          <SideTools>
            <SideGrip/>
            <SelectBtn><PointerIco/></SelectBtn>
            <SideSep $mt={4}/>
            {sideRows.map((r,i)=> r.sep!==undefined ? <SideSep key={i} $mt={r.sep}/> :
              <SideRow key={i} $mt={r.mt} $solo={!r.c}>
                <SideIcon><r.I/></SideIcon>
                {r.c ? <SideCaret><Caret/></SideCaret> : null}
              </SideRow>)}
          </SideTools>
          <PagesPanel>
            <PagesInner>
              <PanelHead>Pages<PanelClose><X s={9}/></PanelClose></PanelHead>
              <PageList>
                <Thumb>
                  <ThumbNo>1</ThumbNo>
                  <ThumbPage>usr/lib/gdm3/gdm-x-session[836]</ThumbPage>
                </Thumb>
              </PageList>
            </PagesInner>
            <Strip $ml={5}><Handle><Svg w={4} h={7}><path d="M4 0v7L0 3.500z" fill="#f2f1f0"/></Svg></Handle></Strip>
          </PagesPanel>
          <Workspace>
            <HRulerRow>
              <Corner><Svg w={13}><path d="M6.500 1v11M1 6.500h11" stroke="#222"/></Svg></Corner>
              <HRuler/>
            </HRulerRow>
            <CenterRow>
              <VRuler/>
              <Canvas>
                <PageSheet>
                  <MarginBox>usr/lib/gdm3/gdm-x-session[836]</MarginBox>
                </PageSheet>
              </Canvas>
              <VScroll><VThumb/></VScroll>
            </CenterRow>
            <HScroll><HThumb/></HScroll>
            <TabRow>
              <TabNav>
                <NavIco d="M9 1v10L3 6z" bar={1}/>
                <NavIco d="M8 1v10L2 6z"/>
                <NavIco d="M2 1v10l6-5z"/>
                <NavIco d="M1 1v10l6-5z" bar={8}/>
              </TabNav>
              <TabStrip>
                <Tab $w={99} $active $first>Mise en page</Tab>
                <Tab $w={80}>Contrôles</Tab>
                <Tab $w={106}>Lignes de cote</Tab>
              </TabStrip>
            </TabRow>
          </Workspace>
          <Sidebar>
            <SideStripWrap>
              <Strip><Handle><Svg w={4} h={7}><path d="M0 0v7l4-3.500z" fill="#f2f1f0"/></Svg></Handle></Strip>
            </SideStripWrap>
            <PropsPanel>
              <PropsHead>Propriétés<X s={9}/></PropsHead>
              <SectionHead>
                <Svg w={9}><rect x=".5" y=".5" width="8" height="8" fill="#f6f6f5" stroke="#4a5568"/><path d="M2 4.500h5" stroke="#333"/></Svg>
                <SectionTitle>Page</SectionTitle>
                <Svg w={11}><rect x=".5" y=".5" width="10" height="10" fill="#fff" stroke="#3565a8"/><rect x="1" y="1" width="9" height="2" fill="#6f9bd4"/><path d="M2 8h1M5 8h1M8 8h1" stroke="#333"/></Svg>
              </SectionHead>
              <Form>
                <FormRow><FieldLabel>Format :</FieldLabel><Field/></FormRow>
                <FormRow><FieldLabel $w={110} $mr={3}>Orientation :</FieldLabel><Field>Paysage</Field></FormRow>
                <FormRow><FieldLabel>Arrière-plan :</FieldLabel><Field>Aucun(e)</Field></FormRow>
                <FormRow $mb={9} $h={28}><Field $ml={113} $pl={31}>Insérer une image</Field></FormRow>
                <FormRow $mb={5}><Field $ml={113}>Standard</Field></FormRow>
                <CheckRow $mb={4}><CheckBox/>Afficher l'arrière-plan</CheckRow>
                <CheckRow $mb={7}><CheckBox/>Afficher les objets</CheckRow>
                <FormRow $h={29}><Field $ml={113} $pl={8}>
                  <Svg w={16} h={12}><rect width="16" height="12" fill="#2f62a8"/><rect x="2" y="2" width="12" height="8" fill="#b9cfe9"/><path d="M3 4h10M3 6h7M3 8h9" stroke="#2f62a8"/></Svg>
                  Diapositive maîtresse
                </Field></FormRow>
              </Form>
            </PropsPanel>
            <TabBar>
              <Svg w={14} h={18}><path d="M3 2h8M3 5h8M3 8h8M3 11h8" stroke="#2b3a55"/><path d="M5 13h5l-2.500 3z" fill="#2b3a55"/></Svg>
              <TabSep/>
              <TabIcon $on $mt={6}><WrenchIco/></TabIcon>
              <TabIcon $mt={2}><StyleTabIco/></TabIcon>
              <TabIcon $mt={4}><GalleryTabIco/></TabIcon>
              <TabIcon $mt={3}><CompassIco/></TabIcon>
            </TabBar>
          </Sidebar>
        </Main>
        <StatusBar>
          <Cell $w={610}/>
          <Cell $w={213} $sep $pl={11} $gap={5}>
            <Svg w={14} h={12}><path d="M3 0v12M0 5h6" stroke="#2222cc"/><rect x="4.500" y="5.500" width="9" height="6" fill="none" stroke="#333" strokeDasharray="1 1"/></Svg>
            1,13 / 14,84
          </Cell>
          <Cell $w={200} $pl={2} $gap={6}>
            <Svg w={12} h={12}><rect x="2.500" y="2.500" width="7" height="7" fill="none" stroke="#333" strokeDasharray="1 1"/><rect x="0" y="0" width="3" height="3" fill="#333"/><rect x="9" y="0" width="3" height="3" fill="#333"/></Svg>
            0,00 x 0,00
          </Cell>
          <Cell $w={23} $sep $pl={7}><Svg w={9} h={13}><rect x=".5" y=".5" width="8" height="12" fill="#fff" stroke="#9a9997"/><rect x="3.500" y="4" width="2" height="4" fill="#cc1122"/></Svg></Cell>
          <Cell $w={28} $sep/>
          <Cell $w={166} $sep $pl={8}>Diapo 1 de 1 (Mise en page)</Cell>
          <Cell $w={396} $sep $pl={7}>Standard</Cell>
          <Cell $w={22} $sep $pl={7}><Svg w={9} h={13}><path d="M4.500 0v13M0 6.500h9" stroke="#222" strokeWidth="1.500"/><path d="M4.500 0l2 3h-4zM4.500 13l2-3h-4z" fill="#222"/></Svg></Cell>
          <Cell $w={143} $sep $pl={11} $gap={0}>
            <Svg w={6} h={3}><rect y="1" width="6" height="1.400" fill="#888"/></Svg>
            <ZoomTrack><ZoomKnob/><ZoomMark/></ZoomTrack>
            <Svg w={7} h={7}><path d="M3.500 0v7M0 3.500h7" stroke="#777" strokeWidth="1.400"/></Svg>
          </Cell>
          <Cell $w={52} $sep $pl={10}>77 %</Cell>
        </StatusBar>
      </Win>
    </Body>
  </Screen>;
}
